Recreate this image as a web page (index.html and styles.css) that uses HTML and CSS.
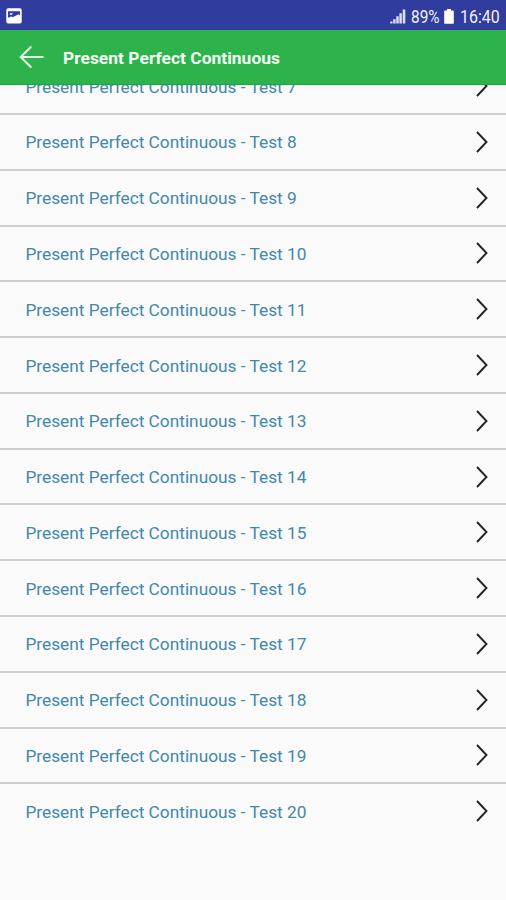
FILE: index.html
```html
<!DOCTYPE html>
<html lang="en">
<head>
<meta charset="utf-8">
<title>Present Perfect Continuous</title>
<link rel="stylesheet" href="styles.css">
</head>
<body>
<svg width="0" height="0" class="defs"><symbol id="chevron" viewBox="0 0 14 24"><path d="M2 2 L11.5 12 L2 22" fill="none" stroke="#222" stroke-width="1.9"/></symbol></svg>
<div class="screen">
  <header class="status">
    <svg class="photo" width="16" height="16" viewBox="0 0 16 16"><rect x=".3" y=".3" width="15.4" height="15.2" rx="1.8" fill="#fff"/><path d="M2 3.3H14V7.5L12.5 6.3L9.2 8L6.3 9.2L5.2 8.2L3.5 9.5H2Z" fill="#303d9e"/><path d="M3.8 5.2H7L5.8 6.8H3.8Z" fill="#fff"/></svg>
    <div class="indicators">
      <svg class="signal" width="16" height="15" viewBox="0 0 16 15"><path d="M.2 12.5h2.3v2H.2zM3.2 10.3h2.4v4.2H3.2zM6.3 7.3h2.4v7.2H6.3zM9.4 4.3h2.4v10.2H9.4z" fill="#dfe1f2"/><path d="M12.7.5h2.6v14h-2.6z" fill="#dfe1f2"/></svg>
      <span class="percent">89%</span>
      <svg class="battery" width="10" height="15" viewBox="0 0 10 15"><path d="M3 0H7V1.6H9.2Q9.8 1.6 9.8 2.2V14Q9.8 14.7 9.2 14.7H.8Q.2 14.7 .2 14V2.2Q.2 1.6 .8 1.6H3Z" fill="#fff"/></svg>
      <span class="time">16:40</span>
    </div>
  </header>
  <div class="toolbar">
    <svg class="back" width="26" height="24" viewBox="0 0 26 24"><path d="M12.3 1.5L1.7 12L12.3 22.5M1.7 12H24.5" fill="none" stroke="#e9f8eb" stroke-width="2"/></svg>
    <h1>Present Perfect Continuous</h1>
  </div>
  <main class="viewport">
    <ul class="tests">
      <li><span>Present Perfect Continuous - Test 7</span><svg><use href="#chevron"/></svg></li>
      <li><span>Present Perfect Continuous - Test 8</span><svg><use href="#chevron"/></svg></li>
      <li><span>Present Perfect Continuous - Test 9</span><svg><use href="#chevron"/></svg></li>
      <li><span>Present Perfect Continuous - Test 10</span><svg><use href="#chevron"/></svg></li>
      <li><span>Present Perfect Continuous - Test 11</span><svg><use href="#chevron"/></svg></li>
      <li><span>Present Perfect Continuous - Test 12</span><svg><use href="#chevron"/></svg></li>
      <li><span>Present Perfect Continuous - Test 13</span><svg><use href="#chevron"/></svg></li>
      <li><span>Present Perfect Continuous - Test 14</span><svg><use href="#chevron"/></svg></li>
      <li><span>Present Perfect Continuous - Test 15</span><svg><use href="#chevron"/></svg></li>
      <li><span>Present Perfect Continuous - Test 16</span><svg><use href="#chevron"/></svg></li>
      <li><span>Present Perfect Continuous - Test 17</span><svg><use href="#chevron"/></svg></li>
      <li><span>Present Perfect Continuous - Test 18</span><svg><use href="#chevron"/></svg></li>
      <li><span>Present Perfect Continuous - Test 19</span><svg><use href="#chevron"/></svg></li>
      <li><span>Present Perfect Continuous - Test 20</span><svg><use href="#chevron"/></svg></li>
    </ul>
  </main>
</div>
</body>
</html>
```
FILE: styles.css
```css
* { box-sizing: border-box; }
body { margin: 0; font-family: Roboto, sans-serif; background: #fafafa; }
.defs { display: none; }
.screen { height: 900px; display: flex; flex-direction: column; overflow: hidden; }
.status {
  flex: none;
  height: 30px;
  padding: 0 6px 0 6px;
  display: flex;
  align-items: center;
  justify-content: space-between;
  background: #303d9e;
  color: #f2f3fb;
}
.photo { margin-top: 1px; }
.indicators { display: flex; align-items: center; font-size: 18.5px; line-height: 20px; padding-top: 3px; }
.signal { margin-right: 5px; }
.percent, .time { transform-origin: left center; white-space: nowrap; }
.percent { width: 29px; transform: scaleX(.83); }
.battery { margin: 0 6px 0 4px; }
.time { width: 40px; transform: scaleX(.86); }
.toolbar {
  flex: none;
  height: 55px;
  padding-left: 19px;
  display: flex;
  align-items: center;
  background: #2eb24b;
  border-bottom: 1px solid #1da63d;
}
.toolbar h1 {
  margin: 2px 0 0 18px;
  font-size: 17.4px;
  line-height: 22px;
  font-weight: 700;
  letter-spacing: .03px;
  color: #f4fff5;
  white-space: nowrap;
}
.viewport { flex: 1; min-height: 0; overflow: hidden; }
.tests { list-style: none; margin: -25.8px 0 0; padding: 0; }
.tests li {
  height: 55.79px;
  padding: 0 17px 0 25.4px;
  display: flex;
  align-items: center;
  justify-content: space-between;
  border-bottom: 2px solid #cecece;
}
.tests li:last-child { border-bottom-color: transparent; }
.tests span { font-size: 17.3px; line-height: 22px; color: #4388ab; padding-top: 1px; white-space: nowrap; }
.tests svg { flex: none; width: 14px; height: 24px; }
```
